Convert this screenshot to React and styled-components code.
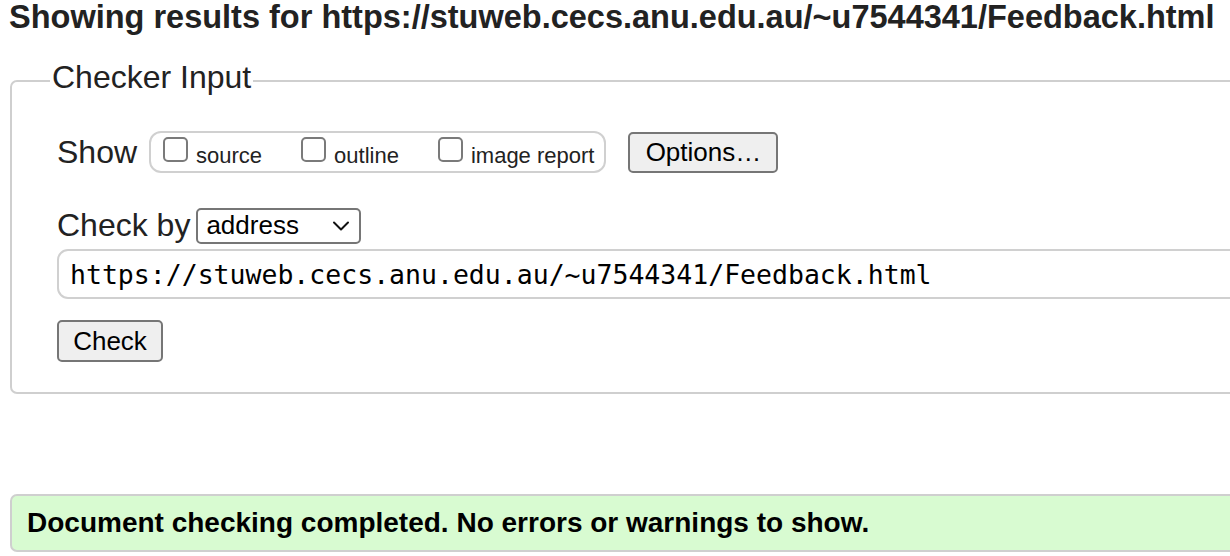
import React from "react";
import styled, { createGlobalStyle } from "styled-components";

const Global = createGlobalStyle`
  html, body { margin: 0; padding: 0; background: #fff; overflow: hidden; }
  body { font-family: "Liberation Sans", Arial, Helvetica, sans-serif; color: #222; }
`;

const Page = styled.div`
  width: 1230px;
  height: 556px;
  overflow: hidden;
`;

const Heading = styled.h2`
  margin: 0;
  padding: 1px 0 0 9px;
  font-size: 32.5px;
  line-height: 32px;
  font-weight: 700;
  color: #222;
  white-space: nowrap;
`;

const Fieldset = styled.fieldset`
  margin: 26px 0 0 10px;
  width: 1300px;
  border: 2px solid #cfcfcf;
  border-radius: 7px;
  padding: 0 0 30px 38px;
  box-sizing: border-box;
`;

const Legend = styled.legend`
  font-size: 32px;
  line-height: 37px;
  padding: 0 2px 6px;
  color: #222;
`;

const Form = styled.div`
  display: flex;
  flex-direction: column;
  align-items: flex-start;
  margin-left: 7px;
`;

const Row = styled.div`
  display: flex;
  align-items: center;
  margin-top: ${(p) => p.$mt}px;
  width: ${(p) => (p.$full ? "100%" : "auto")};
`;

const Label = styled.span`
  font-size: 32px;
  line-height: 37px;
  color: #222;
  margin-right: ${(p) => p.$mr}px;
`;

const Group = styled.div`
  display: flex;
  align-items: flex-start;
  gap: 39px;
  border: 2px solid #d0d0d0;
  border-radius: 12px;
  padding: 2px 10px 0 12px;
  height: 42px;
  box-sizing: border-box;
`;

const Choice = styled.label`
  display: inline-flex;
  align-items: flex-start;
  color: #222;
`;

const ChoiceText = styled.span`
  font-size: 22px;
  line-height: 25px;
  margin-top: 8px;
`;

const Box = styled.input.attrs({ type: "checkbox" })`
  appearance: none;
  -webkit-appearance: none;
  width: 25px;
  height: 25px;
  margin: 2px 8px 0 0;
  border: 2px solid #7a7a7a;
  border-radius: 5px;
  background: #fff;
  box-sizing: border-box;
`;

const Button = styled.button`
  font-family: "Liberation Sans", Arial, Helvetica, sans-serif;
  font-size: 26px;
  line-height: 30px;
  color: #000;
  background: #efefef;
  border: 2px solid #767676;
  border-radius: 5px;
  height: ${(p) => p.$h}px;
  width: ${(p) => p.$w}px;
  padding: 0;
  margin-left: ${(p) => p.$ml || 0}px;
  box-sizing: border-box;
  cursor: default;
`;

const Select = styled.div`
  display: flex;
  align-items: center;
  justify-content: space-between;
  width: 165px;
  height: 36px;
  box-sizing: border-box;
  border: 2px solid #767676;
  border-radius: 5px;
  padding: 0 9px 0 8px;
  font-size: 26px;
  color: #000;
  background: #fff;
`;

const UrlInput = styled.div`
  width: 100%;
  height: 50px;
  box-sizing: border-box;
  border: 2px solid #d0d0d0;
  border-radius: 11px;
  display: flex;
  align-items: center;
  padding: 0 0 0 11px;
  font-family: "DejaVu Sans Mono", Menlo, monospace;
  font-size: 26.5px;
  color: #000;
  white-space: nowrap;
`;

const Message = styled.div`
  margin: 100px 0 0 10px;
  width: 1300px;
  height: 58px;
  box-sizing: border-box;
  background: #d8fbd1;
  border: 2px solid #cfcfcf;
  border-radius: 7px;
  display: flex;
  align-items: center;
  padding: 0 0 0 15px;
  font-size: 28px;
  font-weight: 700;
  color: #000;
  white-space: nowrap;
`;

const Chevron = () => (
  <svg width="18" height="12" viewBox="0 0 18 12" fill="none">
    <path d="M2 2.5 L9 9.5 L16 2.5" stroke="#111" strokeWidth="2" strokeLinecap="round" strokeLinejoin="round" />
  </svg>
);

export default function App() {
  return (
    <Page>
      <Global />
      <Heading>Showing results for https://stuweb.cecs.anu.edu.au/~u7544341/Feedback.html</Heading>
      <Fieldset>
        <Legend>Checker Input</Legend>
        <Form>
          <Row $mt={29}>
            <Label $mr={12}>Show</Label>
            <Group>
              <Choice><Box /><ChoiceText>source</ChoiceText></Choice>
              <Choice><Box /><ChoiceText>outline</ChoiceText></Choice>
              <Choice><Box /><ChoiceText>image report</ChoiceText></Choice>
            </Group>
            <Button $w={150} $h={41} $ml={22}>Options…</Button>
          </Row>
          <Row $mt={34}>
            <Label $mr={6}>Check by</Label>
            <Select>
              <span>address</span>
              <Chevron />
            </Select>
          </Row>
          <Row $mt={5} $full>
            <UrlInput>https://stuweb.cecs.anu.edu.au/~u7544341/Feedback.html</UrlInput>
          </Row>
          <Row $mt={21}>
            <Button $w={106} $h={42}>Check</Button>
          </Row>
        </Form>
      </Fieldset>
      <Message>Document checking completed. No errors or warnings to show.</Message>
    </Page>
  );
}
